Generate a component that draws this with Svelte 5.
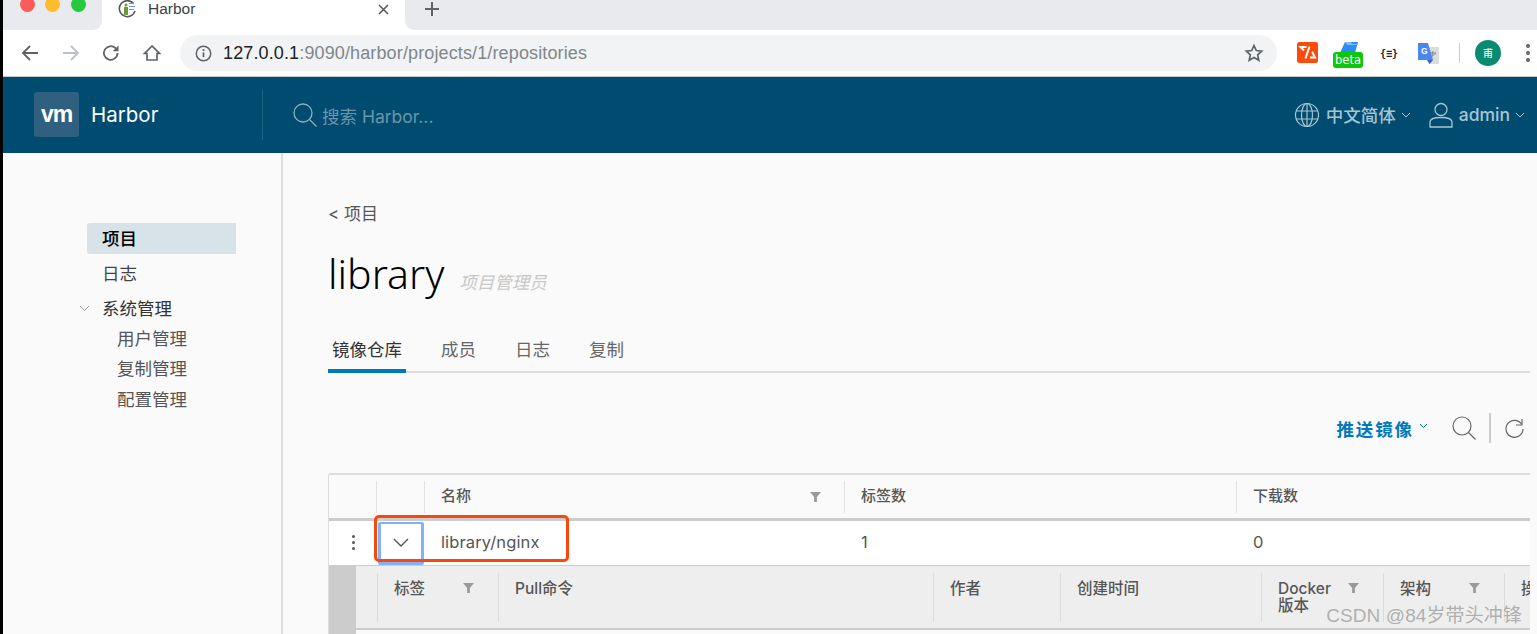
<script lang="ts">
    const sideSub = ["用户管理", "复制管理", "配置管理"];
    const tabs = ["镜像仓库", "成员", "日志", "复制"];
    const detailCols = [
        { label: "作者", w: 127 },
        { label: "创建时间", w: 201 },
    ];
</script>

<div class="page">
    <div class="tabstrip">
        <div class="lights">
            <span class="light red"></span>
            <span class="light yellow"></span>
            <span class="light green"></span>
        </div>
        <div class="tab">
            <svg class="favicon" width="19" height="19" viewBox="0 0 19 19">
                <path d="M15.500 3.500A8 8 0 1 0 17 11" fill="none" stroke="#555" stroke-width="1.500" />
                <rect x="6" y="7" width="4" height="8" fill="#6a9a3a" />
                <circle cx="8" cy="5" r="1.500" fill="#6a9a3a" />
                <path d="M11 3.500h5M11 6.500h6M11 9.500h5" stroke="#5b9fd9" stroke-width="1.200" />
            </svg>
            <span class="tab-title">Harbor</span>
            <svg class="tab-x" width="11" height="11" viewBox="0 0 11 11">
                <path d="M1 1l9 9M10 1l-9 9" stroke="#555" stroke-width="1.500" />
            </svg>
        </div>
        <div class="strip-rest">
            <svg class="tab-plus" width="16" height="16" viewBox="0 0 16 16">
                <path d="M8 1v14M1 8h14" stroke="#5f6368" stroke-width="2" />
            </svg>
        </div>
    </div>

    <div class="toolbar">
        <svg class="nav" width="20" height="20" viewBox="0 0 20 20">
            <path d="M18 10H3M10 3l-7 7 7 7" fill="none" stroke="#5f6368" stroke-width="1.800" />
        </svg>
        <svg class="nav" width="20" height="20" viewBox="0 0 20 20">
            <path d="M2 10h15M10 3l7 7-7 7" fill="none" stroke="#bdc1c6" stroke-width="1.800" />
        </svg>
        <svg class="nav" width="20" height="20" viewBox="0 0 20 20">
            <path d="M16.500 10a6.800 6.800 0 1 1-2-4.800L16.500 7" fill="none" stroke="#5f6368" stroke-width="1.800" />
            <path d="M17.500 2.500v5.800h-5.800z" fill="#5f6368" />
        </svg>
        <svg class="nav" width="20" height="20" viewBox="0 0 20 20">
            <path d="M10 3L2.500 10.500h2.500v6.500h10v-6.500h2.500z" fill="none" stroke="#5f6368" stroke-width="1.700" />
        </svg>
        <div class="omnibox">
            <svg width="17" height="17" viewBox="0 0 16 16">
                <circle cx="8" cy="8" r="6.800" fill="none" stroke="#5f6368" stroke-width="1.400" />
                <path d="M8 7v4.500" stroke="#5f6368" stroke-width="1.600" />
                <circle cx="8" cy="4.800" r="1" fill="#5f6368" />
            </svg>
            <span class="url"><b>127.0.0.1</b>:9090/harbor/projects/1/repositories</span>
            <svg class="star" width="20" height="20" viewBox="0 0 20 20">
                <path d="M10 2.500l2.300 5 5.400.6-4 3.700 1.100 5.400-4.800-2.800-4.800 2.800 1.100-5.400-4-3.700 5.400-.6z" fill="none" stroke="#5f6368" stroke-width="1.700" />
            </svg>
        </div>
        <div class="extensions">
            <svg class="ext-code" width="21" height="21" viewBox="0 0 21 21">
                <rect width="21" height="21" rx="2.500" fill="#fc4a0a" />
                <path d="M9.500 5H3.500l3.500 3.500M12.500 4.500l-4 12M13 15.500h5l-3-6" fill="none" stroke="#fff" stroke-width="2" />
            </svg>
            <div class="beta-ext">
                <svg width="18" height="11" viewBox="0 0 18 11">
                    <path d="M5 0h13l-3 11H0z" fill="#2f8df0" />
                    <path d="M5 0h6l1 2h6v1H7z" fill="#7cbcf8" />
                </svg>
                <span class="beta">beta</span>
            </div>
            <span class="braces">{"{≡}"}</span>
            <svg class="ext-translate" width="21" height="21" viewBox="0 0 21 21">
                <path d="M9 4h12v17H11z" fill="#dcdcdc" />
                <path d="M15 8l-1.500 7M11.500 10h6.500M12 15l6-5" stroke="#888" stroke-width="1" fill="none" />
                <path d="M0 0h10l5 17H0z" fill="#4a86ec" />
                <path d="M9 17h6l-3.500 4z" fill="#3465b8" />
                <text x="3" y="11" class="gt">G</text>
            </svg>
            <span class="ext-sep"></span>
            <span class="avatar">甫</span>
            <span class="menu-dots"><i></i><i></i><i></i></span>
        </div>
    </div>

    <header class="appbar">
        <div class="brand">
            <span class="logo">vm</span>
            <span class="brand-name">Harbor</span>
        </div>
        <div class="search">
            <svg width="26" height="26" viewBox="0 0 26 26">
                <circle cx="11" cy="11" r="9" fill="none" stroke="#8fb0c2" stroke-width="1.300" />
                <path d="M17.500 17.500l7 7" stroke="#8fb0c2" stroke-width="1.300" />
            </svg>
            <span>搜索 Harbor...</span>
        </div>
        <div class="bar-right">
            <svg width="26" height="26" viewBox="0 0 26 26" fill="none" stroke="#a9c3d1" stroke-width="1.200">
                <circle cx="13" cy="13" r="11.500" />
                <ellipse cx="13" cy="13" rx="5.500" ry="11.500" />
                <path d="M13 1.500v23M2 9h22M2 17h22" />
            </svg>
            <span class="bar-item">中文简体</span>
            <svg class="small-chev" width="10" height="6" viewBox="0 0 10 6">
                <path d="M1 1l4 4 4-4" fill="none" stroke="#a9c3d1" stroke-width="1" />
            </svg>
            <svg class="user" width="24" height="26" viewBox="0 0 24 26" fill="none" stroke="#a9c3d1" stroke-width="1.300">
                <circle cx="12" cy="7.500" r="6" />
                <path d="M1 25v-5c0-3 5-4.500 11-4.500s11 1.500 11 4.500v5z" />
            </svg>
            <span class="bar-item admin">admin</span>
            <svg class="small-chev" width="10" height="6" viewBox="0 0 10 6">
                <path d="M1 1l4 4 4-4" fill="none" stroke="#a9c3d1" stroke-width="1" />
            </svg>
        </div>
    </header>

    <div class="body">
        <nav class="side">
            <div class="side-item active">项目</div>
            <div class="side-item">日志</div>
            <div class="side-item group">
                <svg width="11" height="7" viewBox="0 0 11 7">
                    <path d="M1 1l4.500 4.500L10 1" fill="none" stroke="#999" stroke-width="1" />
                </svg>
                系统管理
            </div>
            {#each sideSub as s}
                <div class="side-sub">{s}</div>
            {/each}
        </nav>

        <main class="content">
            <div class="crumb">&lt; 项目</div>
            <div class="title-row">
                <h1>library</h1>
                <span class="role">项目管理员</span>
            </div>
            <div class="tabs">
                {#each tabs as t, i}
                    <span class="tabs-item" class:current={i === 0}>{t}</span>
                {/each}
            </div>

            <div class="actions">
                <span class="push">推送镜像</span>
                <svg class="push-chev" width="9" height="6" viewBox="0 0 9 6">
                    <path d="M1 1l3.500 3.500L8 1" fill="none" stroke="#0079b8" stroke-width="1" />
                </svg>
                <svg class="act-search" width="25" height="25" viewBox="0 0 25 25">
                    <circle cx="10" cy="10" r="9" fill="none" stroke="#666" stroke-width="1.200" />
                    <path d="M16.500 16.500l7 7" stroke="#666" stroke-width="1.200" />
                </svg>
                <span class="act-sep"></span>
                <svg class="act-refresh" width="21" height="21" viewBox="0 0 21 21">
                    <path d="M17.500 6A8.500 8.500 0 1 0 19 11" fill="none" stroke="#666" stroke-width="1.200" />
                    <path d="M18 1v6h-6" fill="none" stroke="#666" stroke-width="1.200" />
                </svg>
            </div>

            <div class="grid">
                <div class="grid-head">
                    <div class="cell c-act"></div>
                    <div class="cell c-exp"></div>
                    <div class="cell c-name">
                        名称
                        <svg class="filter" width="11" height="10" viewBox="0 0 12 11"><path d="M0 0h12L7.500 5.500V11h-3V5.500z" /></svg>
                    </div>
                    <div class="cell c-tags">标签数</div>
                    <div class="cell c-pulls">下载数</div>
                </div>
                <div class="grid-row">
                    <div class="cell c-act">
                        <span class="kebab"><i></i><i></i><i></i></span>
                    </div>
                    <div class="cell c-exp">
                        <span class="expander">
                            <svg width="16" height="9" viewBox="0 0 16 9">
                                <path d="M1 1l7 7 7-7" fill="none" stroke="#555" stroke-width="1.400" />
                            </svg>
                        </span>
                    </div>
                    <div class="cell c-name">library/nginx</div>
                    <div class="cell c-tags">1</div>
                    <div class="cell c-pulls">0</div>
                </div>
                <div class="detail">
                    <div class="detail-strip"></div>
                    <div class="detail-head">
                        <div class="dcell d-first"></div>
                        <div class="dcell d-tag">
                            标签
                            <svg class="filter" width="11" height="10" viewBox="0 0 12 11"><path d="M0 0h12L7.500 5.500V11h-3V5.500z" /></svg>
                        </div>
                        <div class="dcell d-pull">Pull命令</div>
                        {#each detailCols as c}
                            <div class="dcell" style="width: {c.w}px">{c.label}</div>
                        {/each}
                        <div class="dcell d-docker">
                            <span>Docker<br />版本</span>
                            <svg class="filter" width="11" height="10" viewBox="0 0 12 11"><path d="M0 0h12L7.500 5.500V11h-3V5.500z" /></svg>
                        </div>
                        <div class="dcell d-arch">
                            架构
                            <svg class="filter" width="11" height="10" viewBox="0 0 12 11"><path d="M0 0h12L7.500 5.500V11h-3V5.500z" /></svg>
                        </div>
                        <div class="dcell d-last">操作</div>
                    </div>
                </div>
                <span class="callout"></span>
            </div>
        </main>
    </div>

    <span class="watermark">CSDN @84岁带头冲锋</span>
</div>

<style>
    :global(body) {
        margin: 0;
        background: #fafafa;
        font-family: Inter, "Noto Sans CJK SC", sans-serif;
    }

    .page {
        position: relative;
        width: 1537px;
        height: 634px;
        overflow: hidden;
        display: flex;
        flex-direction: column;
        color: #565656;
    }

    .page::before {
        content: "";
        position: absolute;
        left: 0;
        top: 0;
        bottom: 0;
        width: 3px;
        background: #000;
        z-index: 3;
    }

    .tabstrip {
        height: 30px;
        flex: none;
        background: #fff;
        display: flex;
        align-items: stretch;
    }

    .lights {
        width: 102px;
        background: #e8eaed;
        border-bottom-right-radius: 9px;
        display: flex;
        gap: 10.500px;
        padding-left: 19.500px;
        box-sizing: border-box;
        flex: none;
    }

    .light {
        width: 15px;
        height: 15px;
        margin-top: -3px;
        border-radius: 50%;
    }

    .red { background: #fc5b57; }
    .yellow { background: #fdbc2e; }
    .green { background: #28c93f; }

    .tab {
        width: 303px;
        flex: none;
        display: flex;
        align-items: center;
        padding: 0 0 12px 16px;
        box-sizing: border-box;
    }

    .favicon {
        margin-right: 11px;
    }

    .tab-title {
        font-family: "Liberation Sans", sans-serif;
        font-size: 15.500px;
        color: #3c4043;
    }

    .tab-x {
        margin-left: auto;
        margin-right: 16px;
    }

    .strip-rest {
        flex: 1;
        background: #e8eaed;
        border-bottom-left-radius: 9px;
        display: flex;
        align-items: flex-start;
    }

    .tab-plus {
        margin: 1px 0 0 19px;
    }

    .toolbar {
        height: 46px;
        flex: none;
        background: #fff;
        border-bottom: 1px solid #c8c8c8;
        display: flex;
        align-items: center;
        padding-left: 20px;
    }

    .nav {
        margin-right: 20.500px;
    }

    .omnibox {
        width: 1097px;
        height: 36px;
        margin-left: -2px;
        border-radius: 18px;
        background: #f1f3f4;
        display: flex;
        align-items: center;
        padding: 0 13px 0 15px;
        box-sizing: border-box;
        gap: 11px;
        flex: none;
    }

    .url {
        font-family: "Liberation Sans", sans-serif;
        font-size: 18px;
        letter-spacing: 0.130px;
        color: #80868b;
    }

    .url b {
        font-weight: normal;
        color: #202124;
    }

    .star {
        margin-left: auto;
    }

    .extensions {
        display: flex;
        align-items: center;
        margin-left: 20px;
        flex: none;
    }

    .ext-code {
        margin-top: -1px;
    }

    .beta-ext {
        width: 30px;
        height: 26px;
        margin: 4px 0 0 15px;
        position: relative;
        display: flex;
        justify-content: flex-end;
    }

    .beta-ext svg {
        margin-right: 5px;
    }

    .beta {
        position: absolute;
        left: 0;
        bottom: 0;
        width: 30px;
        height: 16px;
        line-height: 16px;
        border-radius: 3px;
        background: #0cc80c;
        color: #fff;
        text-align: center;
        font-size: 11.500px;
        font-family: "DejaVu Sans", sans-serif;
    }

    .braces {
        margin-left: 17px;
        font-size: 10px;
        font-weight: 700;
        color: #222;
        font-family: "DejaVu Sans Mono", monospace;
    }

    .ext-translate {
        margin-left: 20px;
    }

    .gt {
        font-size: 8.500px;
        font-weight: 700;
        fill: #fff;
        font-family: "Liberation Sans", sans-serif;
    }

    .ext-sep {
        width: 1px;
        height: 20px;
        background: #ccc;
        margin-left: 20px;
    }

    .avatar {
        width: 26px;
        height: 26px;
        border-radius: 50%;
        background: #0b8a72;
        color: #fff;
        font-size: 10px;
        line-height: 26px;
        text-align: center;
        margin-left: 15px;
    }

    .menu-dots {
        display: flex;
        flex-direction: column;
        gap: 3px;
        margin-left: 25px;
    }

    .menu-dots i {
        width: 4px;
        height: 4px;
        border-radius: 50%;
        background: #5f6368;
    }

    .appbar {
        height: 76px;
        flex: none;
        background: #004c70;
        display: flex;
        align-items: center;
        padding-left: 34px;
    }

    .brand {
        width: 228px;
        height: 50px;
        border-right: 1px solid #22607f;
        display: flex;
        align-items: center;
        gap: 12px;
        margin-top: -1px;
    }

    .logo {
        width: 45px;
        height: 45px;
        border-radius: 3px;
        background: #2f607f;
        color: #fff;
        font-family: "Liberation Sans", sans-serif;
        font-weight: 700;
        font-size: 23px;
        letter-spacing: -1px;
        line-height: 45px;
        text-align: center;
    }

    .brand-name {
        color: #fff;
        font-size: 20.500px;
        font-weight: 400;
    }

    .search {
        display: flex;
        align-items: center;
        gap: 4px;
        margin-left: 29px;
        color: #6c95aa;
        font-size: 17.500px;
    }

    .bar-right {
        margin-left: auto;
        display: flex;
        align-items: center;
        margin-right: 12px;
        color: #a9c3d1;
    }

    .bar-item {
        font-size: 17.500px;
        font-weight: 500;
        margin-left: 6px;
        margin-top: -2px;
    }

    .small-chev {
        margin-left: 5px;
    }

    .user {
        margin: 0 6px 0 18px;
    }

    .bar-item.admin {
        margin-left: 0;
    }

    .body {
        flex: 1;
        display: flex;
        min-height: 0;
    }

    .side {
        width: 283px;
        flex: none;
        box-sizing: border-box;
        border-right: 2px solid #ddd;
        padding: 70px 0 0 87px;
        font-size: 17.500px;
        color: #444;
    }

    .side-item {
        width: 149px;
        height: 31px;
        line-height: 31px;
        padding-left: 15px;
        box-sizing: border-box;
        margin-bottom: 4px;
        position: relative;
    }

    .side-item.active {
        background: #d8e3e9;
        border-radius: 3px 0 0 3px;
        color: #000;
        font-weight: 500;
    }

    .side-item.group {
        margin-bottom: 0;
        display: flex;
        align-items: center;
        gap: 12px;
        padding-left: 0;
        margin-left: -8px;
        color: #333;
    }

    .side-sub {
        height: 30.300px;
        line-height: 30px;
        padding-left: 30px;
        color: #565656;
    }

    .content {
        flex: 1;
        min-width: 0;
        padding: 50px 7px 0 45px;
        display: flex;
        flex-direction: column;
    }

    .crumb {
        font-size: 17px;
        line-height: 22px;
        color: #565656;
    }

    .title-row {
        display: flex;
        align-items: baseline;
        margin-top: 26px;
        gap: 15px;
        height: 52px;
    }

    h1 {
        margin: 0;
        font-family: "Noto Sans", sans-serif;
        font-weight: 300;
        font-size: 41px;
        line-height: 44px;
        color: #000;
    }

    .role {
        font-style: italic;
        font-size: 17.500px;
        color: #c8c8c8;
    }

    .tabs {
        display: flex;
        margin-top: 32px;
        border-bottom: 2px solid #ddd;
        height: 38px;
        box-sizing: border-box;
        flex: none;
    }

    .tabs-item {
        font-size: 17.500px;
        line-height: 30px;
        padding: 0 5px;
        margin-right: 29px;
        color: #666;
        height: 38px;
        box-sizing: border-box;
    }

    .tabs-item.current {
        color: #333;
        border-bottom: 4px solid #0079b8;
        width: 78px;
        text-align: center;
        padding: 0;
        margin-right: 30px;
    }

    .actions {
        display: flex;
        align-items: center;
        justify-content: flex-end;
        margin-top: 40px;
        height: 30px;
        flex: none;
    }

    .push {
        color: #0079b8;
        font-weight: 700;
        font-size: 17.500px;
        letter-spacing: 1.900px;
    }

    .push-chev {
        margin-left: 5px;
        margin-bottom: 4px;
    }

    .act-search {
        margin-left: 24px;
    }

    .act-sep {
        width: 2px;
        height: 30px;
        background: #ccc;
        margin: 0 13px 0 12px;
    }

    .act-refresh {
        margin-right: 5px;
    }

    .grid {
        position: relative;
        flex: 1;
        display: flex;
        flex-direction: column;
        margin-top: 30px;
        border: 1px solid #ddd;
        border-right: none;
        border-bottom: none;
        border-top-width: 2px;
        border-radius: 3px 0 0 0;
    }

    .grid-head,
    .grid-row {
        display: flex;
        box-sizing: border-box;
        flex: none;
    }

    .grid-head {
        height: 46px;
        border-bottom: 3px solid #ccc;
        font-size: 15px;
        font-weight: 500;
        color: #565656;
        background: #fafafa;
    }

    .grid-row {
        height: 45px;
        background: #fff;
        border-bottom: 1px solid #ccc;
        font-size: 16.500px;
        letter-spacing: 0.120px;
        color: #555;
    }

    .cell {
        display: flex;
        align-items: center;
        box-sizing: border-box;
        padding: 0 0 2px 16px;
        position: relative;
    }

    .grid-head .cell {
        border-right: 1px solid #e2e2e2;
        margin: 6px 0 5px;
        padding-bottom: 5px;
    }

    .c-act { width: 48px; padding-left: 0; justify-content: center; }
    .c-exp { width: 48px; padding-left: 0; }
    .c-name { width: 420px; }
    .c-tags { width: 392px; }
    .c-pulls { width: 293px; border-right: none !important; }

    .filter {
        fill: #999;
        flex: none;
    }

    .c-name .filter {
        position: absolute;
        right: 23px;
        top: 11px;
    }

    .kebab {
        display: flex;
        flex-direction: column;
        gap: 3px;
    }

    .kebab i {
        width: 3px;
        height: 3px;
        border-radius: 50%;
        background: #555;
    }

    .expander {
        width: 46px;
        height: 43px;
        margin: 2px 0 0 1px;
        border: 3px solid #84b0f5;
        border-top-width: 2px;
        border-radius: 2px;
        box-sizing: border-box;
        display: flex;
        align-items: center;
        justify-content: center;
        flex: none;
    }

    .detail {
        flex: 1;
        display: flex;
        background: #fafafa;
        min-height: 0;
    }

    .detail-strip {
        width: 27px;
        background: #ccc;
        flex: none;
    }

    .detail-head {
        flex: 1;
        display: flex;
        align-self: flex-start;
        background: #eee;
        height: 64px;
        border-bottom: 2px solid #ccc;
        box-sizing: border-box;
        font-size: 15.500px;
        font-weight: 500;
        color: #565656;
        padding-top: 7px;
    }

    .dcell {
        box-sizing: border-box;
        height: 49px;
        border-right: 1px solid #dcdcdc;
        padding: 7px 0 0 16px;
        line-height: 17px;
        position: relative;
        flex: none;
    }

    .d-first { width: 22px; padding: 0; }
    .d-tag { width: 121px; }
    .d-pull { width: 435px; }
    .d-docker { width: 122px; }
    .d-arch { width: 121px; }
    .d-last { width: 25px; border-right: none; overflow: hidden; white-space: nowrap; }

    .dcell .filter {
        position: absolute;
        right: 24px;
        top: 10px;
    }

    .callout {
        position: absolute;
        left: 45px;
        top: 40px;
        width: 195px;
        height: 47px;
        border: 3px solid #f9480c;
        border-radius: 5px;
        box-sizing: border-box;
    }

    .watermark {
        position: absolute;
        right: 15px;
        bottom: 7px;
        font-family: "Liberation Sans", "Noto Sans CJK SC", sans-serif;
        font-size: 19px;
        letter-spacing: 0.100px;
        color: rgba(120, 120, 120, 0.55);
    }
</style>
